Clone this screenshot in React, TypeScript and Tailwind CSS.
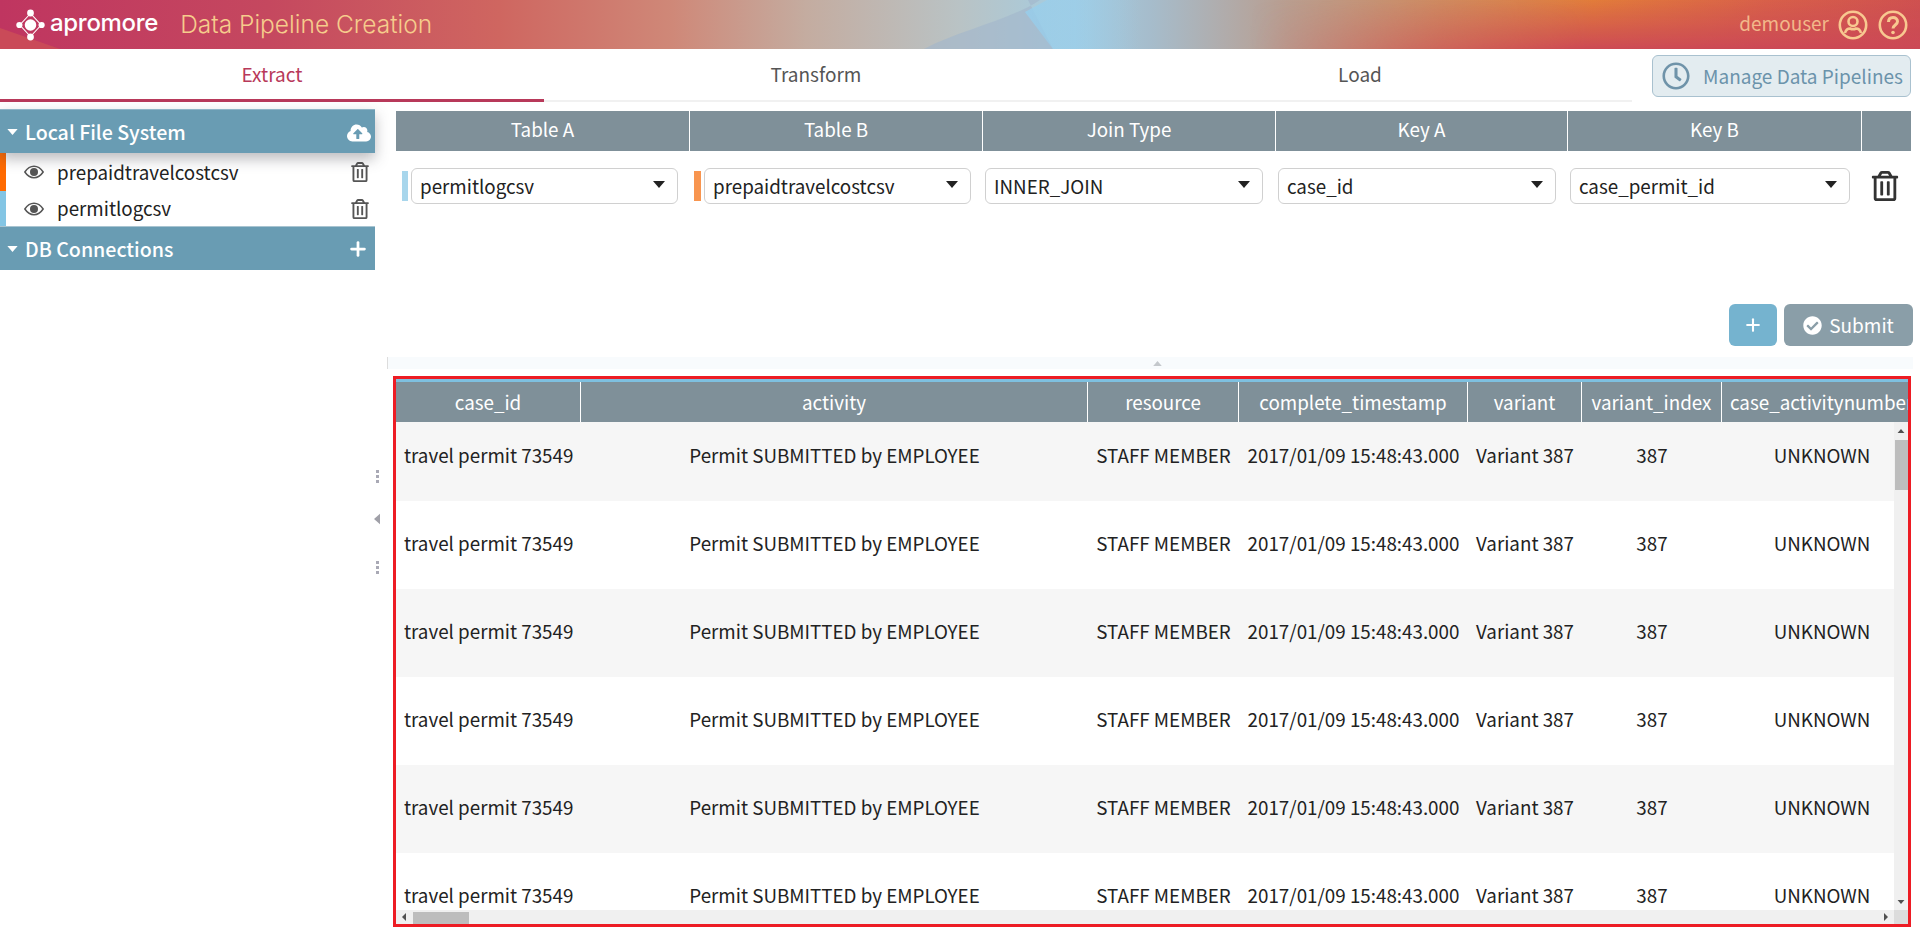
import { FaCheckCircle, FaCloudUploadAlt, FaRegClock, FaRegTrashAlt } from 'react-icons/fa';
import { FiPlus } from 'react-icons/fi';

const FONT = { fontFamily: '"Noto Sans CJK SC", "Noto Sans", sans-serif' };

const columns = [
  { name: 'case_id', width: 'w-[185px]', value: 'travel permit 73549', cell: 'text-left pl-2' },
  { name: 'activity', width: 'w-[507px]', value: 'Permit SUBMITTED by EMPLOYEE', cell: 'text-center' },
  { name: 'resource', width: 'w-[151px]', value: 'STAFF MEMBER', cell: 'text-center' },
  { name: 'complete_timestamp', width: 'w-[229px]', value: '2017/01/09 15:48:43.000', cell: 'text-center' },
  { name: 'variant', width: 'w-[114px]', value: 'Variant 387', cell: 'text-center' },
  { name: 'variant_index', width: 'w-[140px]', value: '387', cell: 'text-center' },
  { name: 'case_activitynumber', width: 'w-[200px]', value: 'UNKNOWN', cell: 'text-center' },
];

const rows = [0, 1, 2, 3, 4, 5];

function Caret({ className }: { className: string }) {
  return (
    <svg viewBox="0 0 12 7" className={className} fill="currentColor">
      <path d="M0 0h12L6 7z" />
    </svg>
  );
}

function Eye() {
  return (
    <svg viewBox="0 0 24 16" className="w-[21px] h-[14px] text-[#555]">
      <path d="M1 8c3-4.500 6.800-6.800 11-6.800S20 3.500 23 8c-3 4.500-6.800 6.800-11 6.800S4 12.500 1 8z" fill="none" stroke="currentColor" strokeWidth="1.800" />
      <circle cx="12" cy="8" r="4.800" fill="currentColor" />
    </svg>
  );
}

function Logo() {
  return (
    <svg viewBox="0 0 32 36" className="w-[29px] h-[32px] text-white">
      <path d="M16 5L28 18 16 31 4 18z" fill="none" stroke="currentColor" strokeWidth="1.200" />
      <circle cx="16" cy="18" r="6.500" fill="currentColor" />
      <circle cx="16" cy="4.500" r="3.800" fill="currentColor" />
      <circle cx="16" cy="31.500" r="3.800" fill="currentColor" />
      <circle cx="3.500" cy="18" r="3.500" fill="currentColor" />
      <circle cx="28.500" cy="18" r="3.500" fill="currentColor" />
    </svg>
  );
}

function UserIcon() {
  return (
    <svg viewBox="0 0 30 30" className="w-[30px] h-[30px]" fill="none" stroke="currentColor" strokeWidth="2.600">
      <circle cx="15" cy="15" r="13.200" />
      <circle cx="15" cy="11.500" r="4.500" />
      <path d="M7 23c1-3.500 3.500-4.500 5-4.500 1.500.8 4.500.8 6 0 1.500 0 4 1 5 4.500" />
    </svg>
  );
}

function HelpIcon() {
  return (
    <svg viewBox="0 0 30 30" className="w-[30px] h-[30px]" fill="none" stroke="currentColor" strokeWidth="2.600">
      <circle cx="15" cy="15" r="13.200" />
      <path d="M10.500 12c0-3 2-4.500 4.500-4.500s4.500 1.600 4.500 4c0 3.500-4.500 3.500-4.500 7" strokeWidth="3" />
      <circle cx="15" cy="22.500" r="1.800" fill="currentColor" stroke="none" />
    </svg>
  );
}

function Select({ value, className }: { value: string; className: string }) {
  return (
    <div className={`h-[36px] rounded-md border border-[#d0d0d0] bg-white flex items-center justify-between pl-2 pr-3 text-[18.8px] text-[#222] ${className}`}>
      <span className="leading-[34px]">{value}</span>
      <Caret className="w-3 h-[7px] text-[#222] -mt-1" />
    </div>
  );
}

function SidebarItem({ name, color, height }: { name: string; color: string; height: string }) {
  return (
    <div className={`flex items-center border-l-[6px] ${height} ${color}`}>
      <div className="ml-[18px] w-5 flex justify-center"><Eye /></div>
      <span className="ml-[13px] text-[18.8px] text-[#222] flex-1">{name}</span>
      <FaRegTrashAlt className="text-[#555] text-[20px] mr-[5px]" />
    </div>
  );
}

function GutterDots() {
  return (
    <div className="flex flex-col gap-[2px]">
      <span className="w-[3px] h-[3px] bg-[#a9a9b5]" />
      <span className="w-[3px] h-[3px] bg-[#a9a9b5]" />
      <span className="w-[3px] h-[3px] bg-[#a9a9b5]" />
    </div>
  );
}

export default function App() {
  return (
    <div style={FONT} className="w-[1920px] h-[931px] overflow-hidden bg-white flex flex-col">
      {/* Header */}
      <div className="relative h-[49px] shrink-0 overflow-hidden bg-[linear-gradient(90deg,#bf3560_0%,#c5485f_14%,#cf6660_26%,#cf8878_35%,#c4aca0_42%,#b9c3c5_50%,#a4cde2_56%,#a6bccb_60%,#b99e90_67%,#cf8a60_75%,#e27c3a_83%,#d8604a_92%,#cf5150_100%)] flex items-center">
        <svg viewBox="0 0 1920 49" preserveAspectRatio="none" className="absolute inset-0 w-full h-full">
          <defs>
            <linearGradient id="skyFade" x1="0" x2="1" y1="0" y2="0">
              <stop offset="0" stopColor="#96cfee" stopOpacity="0.8" />
              <stop offset="1" stopColor="#96cfee" stopOpacity="0" />
            </linearGradient>
            <linearGradient id="roseFade" x1="0" x2="0" y1="0" y2="1">
              <stop offset="0" stopColor="#cb4856" stopOpacity="0" />
              <stop offset="1" stopColor="#cb4856" stopOpacity="0.95" />
            </linearGradient>
            <linearGradient id="roseEdge" x1="0" x2="1" y1="0" y2="0">
              <stop offset="0" stopColor="#000" />
              <stop offset="0.5" stopColor="#fff" />
              <stop offset="1" stopColor="#fff" />
            </linearGradient>
            <mask id="roseMask">
              <rect x="1250" y="0" width="670" height="49" fill="url(#roseEdge)" />
            </mask>
          </defs>
          <path d="M0 28L60 49H0z" fill="#ca4a58" />
          <path d="M1040 0C1010 20 960 30 924 49H1053L1028 0z" fill="#a2b6cb" opacity="0.6" />
          <path d="M1047 0L1025 12 1053 49H1140V0z" fill="url(#skyFade)" />
          <rect x="1250" y="0" width="670" height="49" fill="url(#roseFade)" mask="url(#roseMask)" />
        </svg>
        <div className="relative flex items-center w-full">
          <div className="ml-4 flex items-center">
            <Logo />
            <span style={{ fontFamily: 'Inter, sans-serif' }} className="ml-[5px] text-[24px] font-medium text-white leading-none -mt-1 tracking-[-0.3px]">apromore</span>
            <span style={{ fontFamily: 'Inter, sans-serif' }} className="ml-[22px] text-[24.5px] font-light text-[#f6cc8c] leading-none">Data Pipeline Creation</span>
          </div>
          <div className="ml-auto mr-[12px] flex items-center text-[#f8c890]">
            <span className="text-[19px] leading-none mr-[9px] -mt-1 text-[#f2b88a]">demouser</span>
            <UserIcon />
            <span className="w-[10px]" />
            <HelpIcon />
          </div>
        </div>
      </div>

      {/* Tabs */}
      <div className="h-[53px] shrink-0 flex">
        <div className="w-[544px] h-[53px] border-b-[3px] border-[#b8395a] flex items-center justify-center text-[19px] text-[#b8395a]">Extract</div>
        <div className="w-[544px] h-[53px] border-b-2 border-[#f1f1f1] flex items-center justify-center text-[19px] text-[#555]">Transform</div>
        <div className="w-[544px] h-[53px] border-b-2 border-[#f1f1f1] flex items-center justify-center text-[19px] text-[#555]">Load</div>
        <div className="ml-[20px] mt-[6px] w-[259px] h-[42px] rounded-md border border-[#a9c1cf] bg-[#e3ecf0] flex items-center text-[#6b93ab]">
          <FaRegClock className="ml-[9px] shrink-0 text-[28px] text-[#6f93a9]" />
          <span className="ml-[13px] text-[19px] whitespace-nowrap">Manage Data Pipelines</span>
        </div>
      </div>

      <div className="flex-1 flex min-h-0">
        {/* Sidebar */}
        <div className="w-[375px] shrink-0 pt-[7px]">
          <div className="relative z-10 h-[44px] bg-[#699cb3] border-t border-[#8fb5c6] flex items-center text-white shadow-[0_6px_14px_rgba(60,60,70,0.35)]">
            <Caret className="ml-[7px] w-[11px] h-[6px]" />
            <span className="ml-[7px] text-[19.6px] font-medium flex-1">Local File System</span>
            <FaCloudUploadAlt className="text-[24px] mr-1 mt-[2px]" />
          </div>
          <SidebarItem name="prepaidtravelcostcsv" color="border-[#ff6a00]" height="h-[38px]" />
          <SidebarItem name="permitlogcsv" color="border-[#83c5e4]" height="h-[35px]" />
          <div className="h-[44px] bg-[#699cb3] border-t border-[#a8c4d1] flex items-center text-white">
            <Caret className="ml-[7px] w-[11px] h-[6px]" />
            <span className="ml-[7px] text-[19.6px] font-medium flex-1">DB Connections</span>
            <FiPlus className="text-[22px] mr-[6px]" strokeWidth={3} />
          </div>
        </div>

        {/* Gutter between sidebar and main panel */}
        <div className="w-[21px] shrink-0 flex flex-col items-center pt-[368px] pr-[16px]">
          <GutterDots />
          <svg viewBox="0 0 7 12" className="w-[6px] h-[12px] mt-[30px] ml-[-2px] text-[#a0a0a8] shrink-0" fill="currentColor"><path d="M7 0v12L0 6z" /></svg>
          <div className="mt-[36px]"><GutterDots /></div>
        </div>

        {/* Main */}
        <div className="w-[1517px] shrink-0 flex flex-col">
          <div className="pt-[9px] h-[255px] shrink-0">
            <div className="w-[1515px] h-[40px] bg-[#7f9099] grid grid-cols-[294px_293px_293px_292px_294px_49px] text-white text-[18.8px] leading-[36px] text-center">
              <div className="border-r border-white">Table A</div>
              <div className="border-r border-white">Table B</div>
              <div className="border-r border-white">Join Type</div>
              <div className="border-r border-white">Key A</div>
              <div className="border-r border-white">Key B</div>
              <div />
            </div>
            <div className="w-[1515px] grid grid-cols-[294px_293px_293px_292px_294px_49px] mt-[17px]">
              <div className="flex items-center pl-[6px]">
                <span className="w-[6px] h-[30px] bg-[#a8d6ec]" />
                <Select value="permitlogcsv" className="ml-[3px] w-[267px]" />
              </div>
              <div className="flex items-center pl-[4px]">
                <span className="w-[7px] h-[30px] bg-[#f8954f]" />
                <Select value="prepaidtravelcostcsv" className="ml-[3px] w-[267px]" />
              </div>
              <div className="pl-[2px]"><Select value="INNER_JOIN" className="w-[278px]" /></div>
              <div className="pl-[2px]"><Select value="case_id" className="w-[278px]" /></div>
              <div className="pl-[2px]"><Select value="case_permit_id" className="w-[280px]" /></div>
              <div className="flex items-center pl-[8px]">
                <FaRegTrashAlt className="text-[#333] text-[30px]" />
              </div>
            </div>
            <div className="flex justify-end gap-[7px] pr-0 mt-[100px]">
              <div className="w-[48px] h-[42px] rounded-md bg-[#75b3cf] flex items-center justify-center text-white">
                <FiPlus className="text-[20px]" strokeWidth={2.5} />
              </div>
              <div className="w-[129px] h-[42px] rounded-md bg-[#8a9ea8] flex items-center justify-center text-white text-[19px]">
                <FaCheckCircle className="text-[19px] mr-[7px]" />
                <span>Submit</span>
              </div>
            </div>
          </div>

          {/* Splitter */}
          <div className="h-[12px] shrink-0 ml-[-9px] pl-[14px] bg-[#f8fbfd] border-l border-[#dddddd] flex justify-center items-center">
            <Caret className="w-[9px] h-[5px] rotate-180 text-[#c4c8cc]" />
          </div>

          {/* Preview table, framed in red */}
          <div className="mt-[7px] ml-[-3px] w-[1518px] h-[551px] border-[3px] border-[#ed1c24] relative overflow-hidden">
            <div className="h-[3px] bg-[#7ec0e0]" />
            <div className="flex h-[40px] bg-[#7f9099] text-white text-[18.8px] leading-[39px] text-center overflow-hidden">
              {columns.map((c) => (
                <div key={c.name} className={`${c.width} shrink-0 border-r border-white last:border-r-0 overflow-hidden ${c.name === 'case_activitynumber' ? 'text-left pl-2' : ''}`}>{c.name}</div>
              ))}
            </div>
            <div className="h-[488px] overflow-hidden">
              <div className="-mt-[9px]">
                {rows.map((r) => (
                  <div key={r} className={`flex h-[88px] text-[18.8px] text-[#222] leading-[26px] ${r % 2 === 0 ? 'bg-[#f6f6f6]' : 'bg-white'}`}>
                    {columns.map((c) => (
                      <div key={c.name} className={`${c.width} shrink-0 pt-[29px] ${c.cell}`}>{c.value}</div>
                    ))}
                  </div>
                ))}
              </div>
            </div>

            {/* Scrollbars sit over the table */}
            <div className="absolute right-0 top-[43px] bottom-[14px] w-[14px] bg-[#f0f0f0]">
              <Caret className="absolute top-[7px] left-[3px] w-2 h-1 rotate-180 text-[#505050]" />
              <div className="absolute top-[18px] left-[1px] w-[13px] h-[50px] bg-[#bdbdbd]" />
              <Caret className="absolute bottom-[6px] left-[3px] w-2 h-1 text-[#505050]" />
            </div>
            <div className="absolute left-0 right-[14px] bottom-0 h-[14px] bg-[#f0f0f0]">
              <svg viewBox="0 0 4 8" className="absolute left-[6px] top-[3px] w-1 h-2 text-[#505050]" fill="currentColor"><path d="M4 0v8L0 4z" /></svg>
              <div className="absolute left-[17px] top-[2px] w-[56px] h-[12px] bg-[#bdbdbd]" />
              <svg viewBox="0 0 4 8" className="absolute right-[6px] top-[3px] w-1 h-2 text-[#505050]" fill="currentColor"><path d="M0 0v8l4-4z" /></svg>
            </div>
            <div className="absolute right-0 bottom-0 w-[14px] h-[14px] bg-[#dcdcdc]" />
          </div>
        </div>
      </div>
    </div>
  );
}
